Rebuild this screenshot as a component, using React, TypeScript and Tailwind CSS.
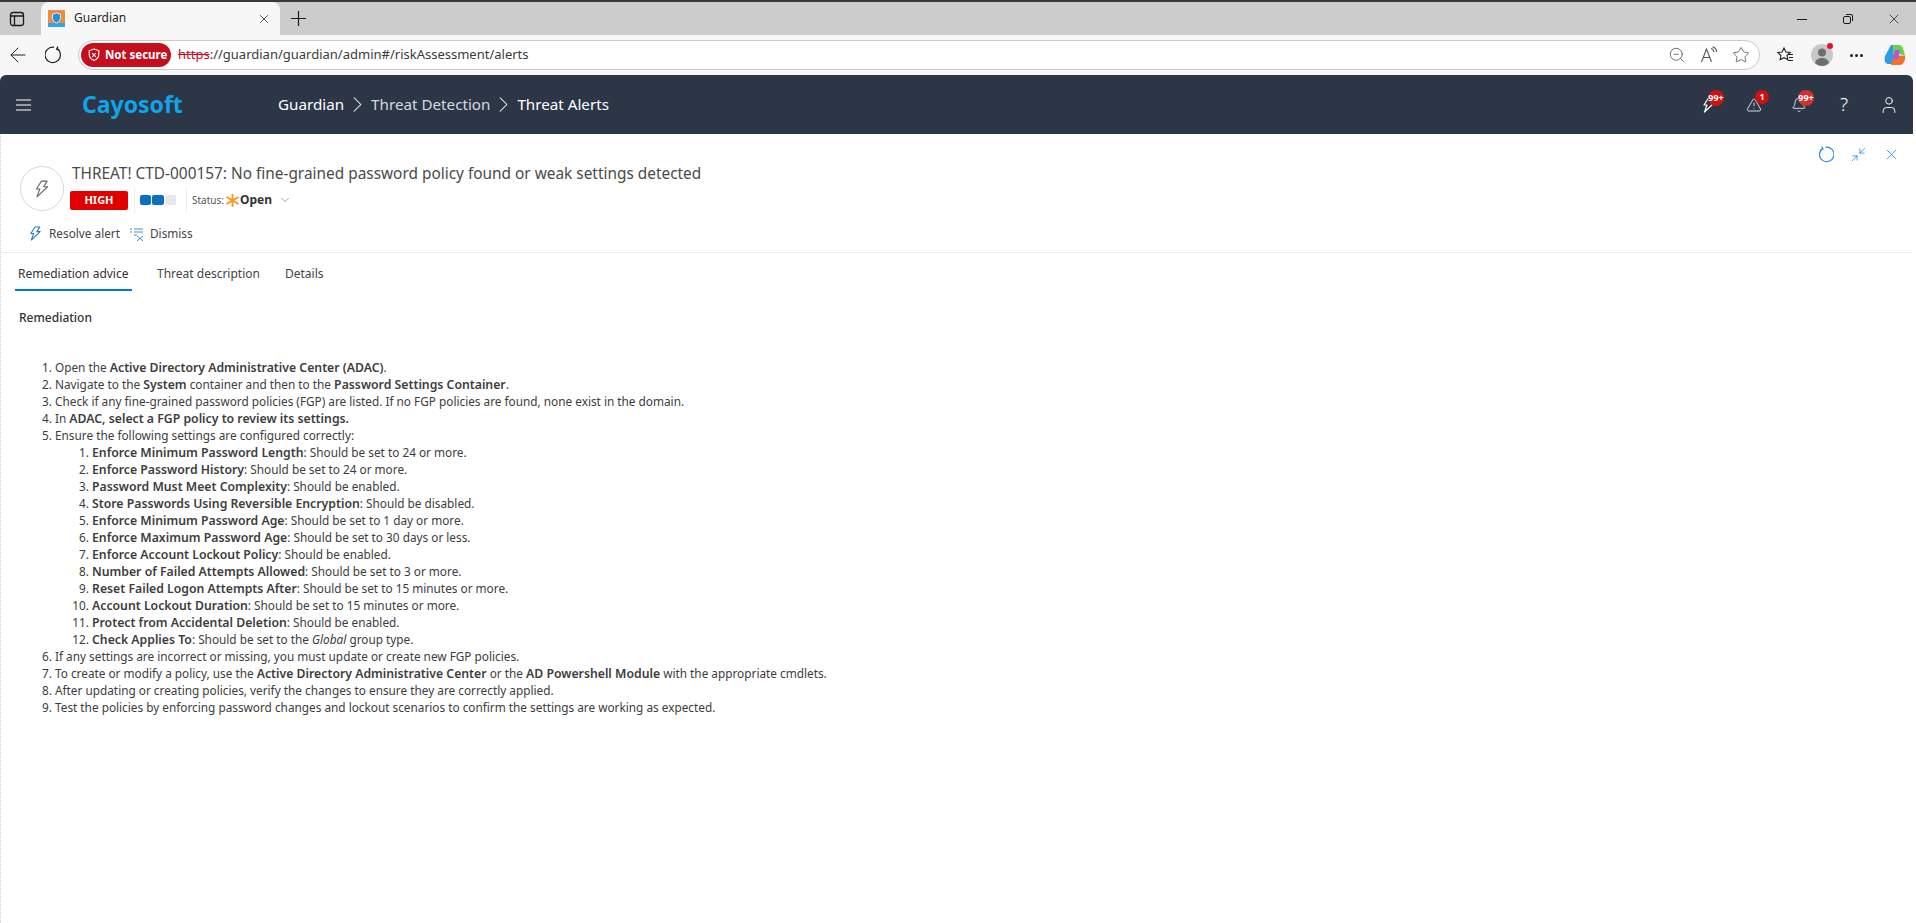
import { ArrowLeft, Bell, ChevronDown, ChevronRight, Minimize2, Star, TriangleAlert, User, X, ZoomOut } from "lucide-react";

const settings = [
  ["Enforce Minimum Password Length", ": Should be set to 24 or more."],
  ["Enforce Password History", ": Should be set to 24 or more."],
  ["Password Must Meet Complexity", ": Should be enabled."],
  ["Store Passwords Using Reversible Encryption", ": Should be disabled."],
  ["Enforce Minimum Password Age", ": Should be set to 1 day or more."],
  ["Enforce Maximum Password Age", ": Should be set to 30 days or less."],
  ["Enforce Account Lockout Policy", ": Should be enabled."],
  ["Number of Failed Attempts Allowed", ": Should be set to 3 or more."],
  ["Reset Failed Logon Attempts After", ": Should be set to 15 minutes or more."],
  ["Account Lockout Duration", ": Should be set to 15 minutes or more."],
  ["Protect from Accidental Deletion", ": Should be enabled."],
];

function Badge({ text, className }: { text: string; className: string }) {
  return (
    <span className={"absolute flex items-center justify-center rounded-full text-white font-bold text-[9px] leading-none " + className}>
      {text}
    </span>
  );
}

function Bolt({ size, color, width = 1 }: { size: number; color: string; width?: number }) {
  return (
    <svg width={size} height={size} viewBox="0 0 16 16" fill="none" stroke={color} strokeWidth={width} strokeLinejoin="round">
      <path d="M7.500 1h5l-3 5h3.500L3.500 15l2.500-7H3z" />
    </svg>
  );
}

function Reload({ size, color, width = 1, className }: { size: number; color: string; width?: number; className?: string }) {
  return (
    <svg className={className} width={size} height={size} viewBox="0 0 16 16" fill="none" stroke={color} strokeWidth={width}>
      <path d="M5.300 2.300A6.800 6.800 0 1 0 8 1.200" />
      <path d="M4.500 0.500l1.200 2.300-2.400 1" />
    </svg>
  );
}

function BrowserChrome() {
  return (
    <>
      <div className="h-[2px] bg-[#3a3a3a]" />
      <div className="h-[33px] bg-[#cccccc] flex items-end text-[#1f1f1f]">
        <div className="w-[41px] h-[33px] pr-[7px] flex items-center justify-center">
          <svg width="16" height="16" viewBox="0 0 16 16" fill="none" stroke="#1a1a1a" strokeWidth="1.3">
            <rect x="1.500" y="1.500" width="13" height="13" rx="2.500" />
            <path d="M1.500 5h13M5.500 5v9.500" />
          </svg>
        </div>
        <div className="w-[239px] h-[33px] bg-[#f7f7f7] rounded-t-lg flex items-center pl-[7px] pr-[9px]">
          <svg width="17" height="17" viewBox="0 0 17 17">
            <rect width="17" height="17" fill="#f08a3c" />
            <rect y="13" width="17" height="4" fill="#2aa8e8" />
            <path d="M8.500 3l4 1.300v3.500c0 2.600-1.800 4.200-4 5.200-2.200-1-4-2.600-4-5.200V4.300z" fill="#1f8fe0" stroke="#fff" strokeWidth="0.800" />
          </svg>
          <span className="ml-[9px] text-[12px] -mt-[2px] font-['Noto_Sans',sans-serif]">Guardian</span>
          <X className="ml-auto" size={14} strokeWidth={1.3} />
        </div>
        <div className="w-[36px] h-[33px] flex items-center justify-center">
          <svg width="15" height="15" viewBox="0 0 15 15" stroke="#1a1a1a" strokeWidth="1.200">
            <path d="M7.500 0v15M0 7.500h15" />
          </svg>
        </div>
        <div className="ml-auto h-[33px] flex items-center pr-[14px] gap-[30px]">
          <svg width="16" height="16" viewBox="0 0 16 16" stroke="#1a1a1a" strokeWidth="1">
            <path d="M3 8.500h10" />
          </svg>
          <svg width="16" height="16" viewBox="0 0 16 16" fill="none" stroke="#1a1a1a" strokeWidth="1">
            <rect x="3.500" y="5.500" width="7" height="7" rx="1.500" />
            <path d="M6 3.500h5a1.500 1.500 0 0 1 1.500 1.500v5" />
          </svg>
          <X size={16} strokeWidth={1.1} color="#1a1a1a" />
        </div>
      </div>
      <div className="h-[40px] bg-[#f7f7f7] flex items-center">
        <div className="w-[34px] flex justify-center ml-[1px]">
          <ArrowLeft size={24} strokeWidth={1} color="#222" />
        </div>
        <div className="w-[37px] flex justify-center">
          <Reload className="-scale-x-100" size={18} color="#222" width={1.1} />
        </div>
        <div className="ml-[6px] w-[1682px] h-[30px] bg-white rounded-full border border-[#c9c9c9] flex items-center pl-[2px] pr-[9px]">
          <div className="w-[90px] h-[24px] bg-[#c50f1f] rounded-full text-white text-[11.500px] font-bold flex items-center pl-[7px] gap-[5px] font-['Noto_Sans',sans-serif]">
            <svg width="12" height="14" viewBox="0 0 12 14" fill="none" stroke="#fff" strokeWidth="1.100">
              <path d="M6 1l4.800 1.600v4c0 3-2.200 4.800-4.800 6-2.600-1.200-4.800-3-4.800-6v-4z" />
              <path d="M4.200 5.200l3.600 3.600M7.800 5.200l-3.600 3.600" />
            </svg>
            Not secure
          </div>
          <span className="ml-[7px] text-[13px] text-[#3b3b3b] font-['Noto_Sans',sans-serif]">
            <span className="text-[#c50f1f] line-through">https</span>://guardian/guardian/admin#/riskAssessment/alerts
          </span>
          <div className="ml-auto flex items-center gap-[14px]">
            <ZoomOut size={18} strokeWidth={1.1} color="#555" />
            <svg width="18" height="18" viewBox="0 0 18 18" fill="none" stroke="#555" strokeWidth="1.100">
              <path d="M1.500 16L6.500 3l5 13M3.300 11.500h6.400" />
              <path d="M11 2.500c1.800.5 2.800 1.800 3 3.500M12.500 0.800c2.500.7 4 2.800 4.200 5.200" />
            </svg>
            <Star size={18} strokeWidth={1.1} color="#555" />
          </div>
        </div>
        <div className="ml-[16px] flex items-center">
          <svg width="18" height="18" viewBox="0 0 18 18" fill="none" stroke="#222" strokeWidth="1.100">
            <path d="M8 2l1.900 4 4.300.5-3.200 3 .9 4.300L8 11.700l-3.900 2.100.9-4.300-3.200-3L6.100 6z" />
            <path d="M12 8.500h5M13 11.500h4M12 14.500h5" />
          </svg>
          <div className="relative ml-[17px] w-[22px] h-[22px] rounded-full bg-[#c8c8c8] flex items-center justify-center">
            <svg width="22" height="22" viewBox="0 0 22 22">
              <circle cx="11" cy="8.500" r="4" fill="#6e6e6e" />
              <path d="M4 19c1-4 4-5 7-5s6 1 7 5c-2 2-4.500 3-7 3s-5-1-7-3z" fill="#6e6e6e" />
            </svg>
            <span className="absolute -top-[1px] right-[0px] w-[6px] h-[6px] rounded-full bg-[#e81123]" />
          </div>
          <div className="ml-[17px] w-[13px] flex justify-between">
            <span className="w-[3px] h-[3px] bg-[#222] rounded-full" />
            <span className="w-[3px] h-[3px] bg-[#222] rounded-full" />
            <span className="w-[3px] h-[3px] bg-[#222] rounded-full" />
          </div>
          <svg className="ml-[21px]" width="22" height="22" viewBox="0 0 22 22">
            <path d="M7 1h6L8 20H4C1 20 0 16 1 12z" fill="#2f9be8" />
            <path d="M9 1h6c3 0 4 3 5 6l1 5-6-2-6 1z" fill="#6ad14a" />
            <path d="M10 11l11 1c1 4-2 9-5 9H7z" fill="#f0732b" />
            <path d="M11 6h5l-2 9H9z" fill="#c04fd8" />
          </svg>
        </div>
      </div>
    </>
  );
}

function AppHeader() {
  return (
    <header className="h-[59px] mr-[3px] rounded-t-md bg-[#2d3646] flex items-center text-white">
      <div className="w-[82px] pl-[16px]">
        <svg width="15" height="12" viewBox="0 0 15 12" stroke="#fff" strokeWidth="1.200">
          <path d="M0 1h15M0 6h15M0 11h15" />
        </svg>
      </div>
      <span className="w-[196px] text-[#0ea5e9] text-[23px] font-bold font-['Noto_Sans',sans-serif] leading-none">Cayosoft</span>
      <nav className="flex items-center text-[15.200px] font-['Noto_Sans',sans-serif]">
        <span>Guardian</span>
        <ChevronRight size={27} strokeWidth={0.9} />
        <span className="text-[#d5dae2]">Threat Detection</span>
        <ChevronRight size={27} strokeWidth={0.9} />
        <span>Threat Alerts</span>
      </nav>
      <div className="ml-auto flex items-center gap-[25px] pr-[14px]">
        <div className="relative w-[20px] h-[18px] flex items-center justify-center">
          <Bolt size={16} color="#fff" width={1.2} />
          <Badge text="99+" className="-top-[6px] left-[9px] w-[16px] h-[16px] bg-[#d20f0f]" />
        </div>
        <div className="relative w-[20px] h-[18px] flex items-center justify-center">
          <TriangleAlert size={16} strokeWidth={1.2} />
          <Badge text="1" className="-top-[6px] left-[11px] w-[14px] h-[14px] bg-[#d20f0f]" />
        </div>
        <div className="relative w-[20px] h-[18px] flex items-center justify-center">
          <Bell size={16} strokeWidth={1.2} />
          <Badge text="99+" className="-top-[6px] left-[9px] w-[16px] h-[16px] bg-[#d32f2f]" />
        </div>
        <span className="w-[20px] text-center text-[19px] leading-none font-light font-['Noto_Sans',sans-serif]">?</span>
        <div className="w-[20px] flex justify-center">
          <User size={20} strokeWidth={1.1} />
        </div>
      </div>
    </header>
  );
}

function AlertHead() {
  return (
    <div className="relative h-[119px] border-b border-[#ececec]">
      <div className="absolute top-[12px] right-[13px] flex items-center gap-[16px] text-[#1e88e5]">
        <Reload size={17} color="#1e88e5" />
        <Minimize2 size={17} strokeWidth={1.1} />
        <X size={17} strokeWidth={1.1} />
      </div>
      <div className="flex pt-[32px] pl-[19px]">
        <div className="w-[44px] h-[45px] rounded-full border border-[#d8d8d8] flex items-center justify-center">
          <Bolt size={18} color="#666" />
        </div>
        <div className="ml-[8px] -mt-[3px]">
          <h1 className="text-[15.400px] leading-[22px] font-normal text-[#4a4a4a] font-['Noto_Sans',sans-serif]">
            THREAT! CTD-000157: No fine-grained password policy found or weak settings detected
          </h1>
          <div className="flex items-center mt-[3px] h-[24px] font-['Noto_Sans',sans-serif]">
            <span className="-ml-[2px] w-[58px] h-[19px] rounded-[2px] bg-[#e00000] text-white text-[11px] font-bold flex items-center justify-center">HIGH</span>
            <div className="ml-[6px] h-[24px] border-l border-[#ececec] pl-[5px] pr-[10px] flex items-center gap-[1px]">
              <span className="w-[11px] h-[10px] rounded-[2px] bg-[#106ebe]" />
              <span className="w-[12px] h-[10px] rounded-[2px] bg-[#106ebe]" />
              <span className="w-[11px] h-[10px] rounded-[2px] bg-[#e8e8e8]" />
            </div>
            <div className="h-[24px] border-l border-[#ececec] pl-[5px] flex items-center">
              <span className="text-[10px] text-[#555]">Status:</span>
              <svg className="ml-[2px]" width="13" height="13" viewBox="0 0 13 13" stroke="#f7941d" strokeWidth="1.800">
                <path d="M6.500 0v13M0.500 3l12 7M12.500 3l-12 7" />
              </svg>
              <span className="ml-[1px] text-[12px] font-bold text-[#333]">Open</span>
              <ChevronDown className="ml-[6px]" size={14} strokeWidth={1} color="#666" />
            </div>
          </div>
        </div>
      </div>
      <div className="flex items-center pl-[27px] mt-[13px] text-[11.800px] text-[#444] font-['Noto_Sans',sans-serif]">
        <Bolt size={15} color="#1e78c8" width={1.1} />
        <span className="ml-[6px]">Resolve alert</span>
        <svg className="ml-[9px]" width="16" height="16" viewBox="0 0 16 16" fill="none" stroke="#3f8fd2" strokeWidth="1">
          <path d="M1 3h2M5 3h9M1 6h2M5 6h9M5 9h3M8 10l6 5M14 10l-6 5" />
        </svg>
        <span className="ml-[5px]">Dismiss</span>
      </div>
    </div>
  );
}

export default function App() {
  return (
    <div className="w-[1916px] h-[923px] overflow-hidden bg-white flex flex-col font-['Noto_Sans',sans-serif]">
      <BrowserChrome />
      <AppHeader />
      <main className="flex-1 mr-[3px] border-l border-dotted border-[#cfcfcf]">
        <AlertHead />
        <div className="h-[38px] flex text-[12px] text-[#444]">
          <div className="ml-[14px] w-[117px] pl-[3px] pt-[12px] border-b-2 border-[#0078d4] text-[#333]">Remediation advice</div>
          <div className="ml-[25px] pt-[12px]">Threat description</div>
          <div className="ml-[25px] pt-[12px]">Details</div>
        </div>
        <h2 className="ml-[18px] mt-[18px] text-[12px] leading-[17px] font-medium text-[#333]">Remediation</h2>
        <ol className="mt-[33px] ml-[54px] list-decimal text-[11.800px] leading-[17px] text-[#3d3d3d] [&_b]:text-[12.250px] [&_b]:font-semibold">
          <li>Open the <b>Active Directory Administrative Center (ADAC)</b>.</li>
          <li>Navigate to the <b>System</b> container and then to the <b>Password Settings Container</b>.</li>
          <li>Check if any fine-grained password policies (FGP) are listed. If no FGP policies are found, none exist in the domain.</li>
          <li>In <b>ADAC, select a FGP policy to review its settings.</b></li>
          <li>
            Ensure the following settings are configured correctly:
            <ol className="ml-[37px] list-decimal">
              {settings.map(([name, rest]) => (
                <li key={name}><b>{name}</b>{rest}</li>
              ))}
              <li><b>Check Applies To</b>: Should be set to the <i>Global</i> group type.</li>
            </ol>
          </li>
          <li>If any settings are incorrect or missing, you must update or create new FGP policies.</li>
          <li>To create or modify a policy, use the <b>Active Directory Administrative Center</b> or the <b>AD Powershell Module</b> with the appropriate cmdlets.</li>
          <li>After updating or creating policies, verify the changes to ensure they are correctly applied.</li>
          <li>Test the policies by enforcing password changes and lockout scenarios to confirm the settings are working as expected.</li>
        </ol>
      </main>
    </div>
  );
}
